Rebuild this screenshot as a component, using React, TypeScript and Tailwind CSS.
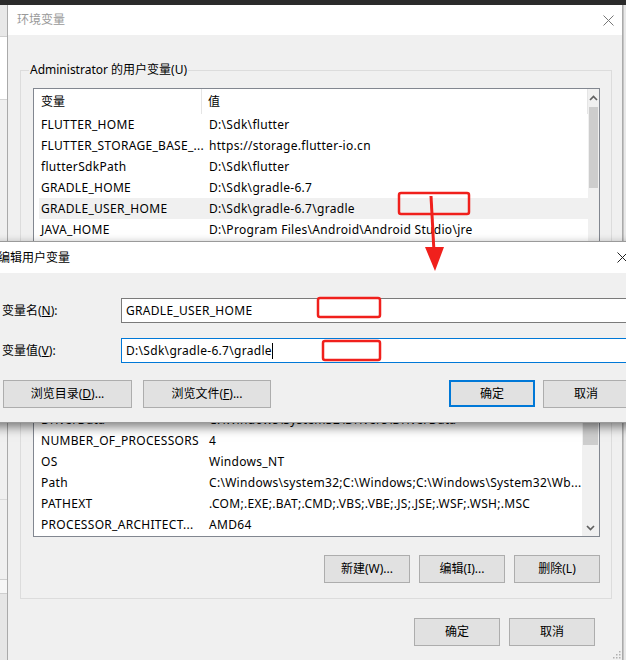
import type { ReactNode } from 'react';

type EnvVar = { name: string; value: string; selected?: boolean };

const userVars: EnvVar[] = [
  { name: 'FLUTTER_HOME', value: 'D:\\Sdk\\flutter' },
  { name: 'FLUTTER_STORAGE_BASE_...', value: 'https://storage.flutter-io.cn' },
  { name: 'flutterSdkPath', value: 'D:\\Sdk\\flutter' },
  { name: 'GRADLE_HOME', value: 'D:\\Sdk\\gradle-6.7' },
  { name: 'GRADLE_USER_HOME', value: 'D:\\Sdk\\gradle-6.7\\gradle', selected: true },
  { name: 'JAVA_HOME', value: 'D:\\Program Files\\Android\\Android Studio\\jre' },
  { name: 'OneDrive', value: 'C:\\Users\\Administrator\\OneDrive' },
  { name: 'Path', value: 'C:\\Users\\Administrator\\AppData\\Local\\Microsoft\\WindowsApps;' },
];

const systemVars: EnvVar[] = [
  { name: 'ComSpec', value: 'C:\\Windows\\system32\\cmd.exe' },
  { name: 'DriverData', value: 'C:\\Windows\\System32\\Drivers\\DriverData' },
  { name: 'NUMBER_OF_PROCESSORS', value: '4' },
  { name: 'OS', value: 'Windows_NT' },
  { name: 'Path', value: 'C:\\Windows\\system32;C:\\Windows;C:\\Windows\\System32\\Wb...' },
  { name: 'PATHEXT', value: '.COM;.EXE;.BAT;.CMD;.VBS;.VBE;.JS;.JSE;.WSF;.WSH;.MSC' },
  { name: 'PROCESSOR_ARCHITECT...', value: 'AMD64' },
];

function WinButton({ children, className = '' }: { children: ReactNode; className?: string }) {
  return (
    <div className={`h-[28px] flex items-center justify-center bg-[#e1e1e1] border border-[#adadad] text-black ${className}`}>
      {children}
    </div>
  );
}

function Chevron({ down = false }: { down?: boolean }) {
  return (
    <svg width="9" height="6" viewBox="0 0 9 6" className={down ? 'rotate-180' : ''}>
      <path d="M1 5L4.5 1.5L8 5" fill="none" stroke="#606060" strokeWidth="1.7" />
    </svg>
  );
}

function CloseGlyph({ color }: { color: string }) {
  return (
    <svg width="11" height="11" viewBox="0 0 11 11">
      <path d="M0.5 0.5L10.5 10.5M10.5 0.5L0.5 10.5" stroke={color} strokeWidth="1" />
    </svg>
  );
}

function Row({ item }: { item: EnvVar }) {
  return (
    <div className={`h-[21px] ml-[5px] flex items-center shrink-0 tracking-[0.3px] ${item.selected ? 'bg-[#f0f0f0]' : ''}`}>
      <div className="w-[163px] shrink-0 pl-[2px] whitespace-nowrap">{item.name}</div>
      <div className="pl-[7px] whitespace-nowrap">{item.value}</div>
    </div>
  );
}

function Group({ label, children }: { label: string; children: ReactNode }) {
  return (
    <div className="relative ml-[12px] mr-[10px] border border-[#dcdcdc] pt-[17px] pl-[12px] pr-[11px] pb-[15px]">
      <span className="absolute left-[8px] top-[-10px] px-[1px] bg-[#f0f0f0] leading-[18px]">{label}</span>
      {children}
    </div>
  );
}

function GroupButtons() {
  return (
    <div className="mt-[18px] flex justify-end gap-[9px]">
      <WinButton className="w-[86px]">新建(W)...</WinButton>
      <WinButton className="w-[86px]">编辑(I)...</WinButton>
      <WinButton className="w-[86px]">删除(L)</WinButton>
    </div>
  );
}

function UserList() {
  return (
    <div className="h-[160px] border border-[#828790] bg-white flex overflow-hidden">
      <div className="flex-1 flex flex-col">
        <div className="h-[25px] flex items-center shrink-0">
          <div className="w-[168px] pl-[7px] h-full flex items-center border-r border-[#e5e5e5]">变量</div>
          <div className="flex-1 pl-[6px] h-full flex items-center border-r border-[#e5e5e5]">值</div>
        </div>
        {userVars.map((v) => (
          <Row key={v.name} item={v} />
        ))}
      </div>
      <div className="w-[17px] bg-[#f0f0f0] flex flex-col">
        <div className="h-[18px] flex items-center justify-center">
          <Chevron />
        </div>
        <div className="mx-[1px] h-[81px] bg-[#cdcdcd]" />
      </div>
    </div>
  );
}

function SystemList() {
  return (
    <div className="h-[195px] border border-[#828790] bg-white flex overflow-hidden">
      <div className="flex-1 flex flex-col justify-end pb-[1px]">
        {systemVars.map((v) => (
          <Row key={v.name} item={v} />
        ))}
      </div>
      <div className="w-[17px] bg-[#f0f0f0] flex flex-col">
        <div className="h-[17px] flex items-center justify-center">
          <Chevron />
        </div>
        <div className="mt-[50px] mx-[1px] h-[35px] bg-[#cdcdcd]" />
        <div className="flex-1" />
        <div className="h-[17px] flex items-center justify-center">
          <Chevron down />
        </div>
      </div>
    </div>
  );
}

function MainDialog() {
  return (
    <div className="w-[616px] flex flex-col border-x border-[#aaaaaa] bg-[#f0f0f0]">
      {/* title bar (inactive) */}
      <div className="h-[30px] bg-white flex items-center justify-between pl-[9px] pr-[8px] shrink-0">
        <span className="text-[#999999]">环境变量</span>
        <CloseGlyph color="#777777" />
      </div>

      <div className="mt-[35px]">
        <Group label="Administrator 的用户变量(U)">
          <UserList />
          <GroupButtons />
        </Group>
      </div>

      <div className="mt-[14px]">
        <Group label="系统变量(S)">
          <SystemList />
          <GroupButtons />
        </Group>
      </div>

      <div className="mt-[19px] mr-[27px] flex justify-end gap-[9px]">
        <WinButton className="w-[86px]">确定</WinButton>
        <WinButton className="w-[86px]">取消</WinButton>
      </div>

      {/* size grip */}
      <div className="flex-1 flex items-end justify-end pr-[1px] pb-[1px]">
        <svg width="9" height="9" viewBox="0 0 9 9">
          {[
            [7, 1], [7, 4], [4, 4], [7, 7], [4, 7], [1, 7],
          ].map(([x, y]) => (
            <rect key={`${x}-${y}`} x={x} y={y} width="1.5" height="1.5" fill="#b0b0b0" />
          ))}
        </svg>
      </div>
    </div>
  );
}

function BackWindow() {
  // strip of another window peeking out on the left
  return (
    <div className="w-[7px] flex flex-col bg-[#f0f0f0] overflow-hidden">
      <div className="h-[32px] bg-[#e8e8e8] border-b border-[#cfcfcf]" />
      <div className="h-[63px] bg-white border-b border-[#d5d5d5]" />
      <div className="h-[400px] bg-[#f0f0f0] border-b border-[#dadada]" />
      <div className="h-[80px] bg-[#f0f0f0] border-b border-[#cfcfcf]" />
      <div className="h-[14px] bg-[#f7f7f7] border-b border-[#cfcfcf]" />
      <div className="flex-1 bg-[#e6e6e6]" />
    </div>
  );
}

function EditDialog() {
  return (
    <div className="absolute left-[-12px] top-[241px] w-[660px] h-[182px] flex flex-col bg-[#f0f0f0] border border-[#9a9a9a] shadow-[0_4px_10px_rgba(0,0,0,0.5)]">
      <div className="h-[31px] bg-white flex items-center justify-between pl-[9px] pr-[19px] shrink-0">
        <span>编辑用户变量</span>
        <CloseGlyph color="#222222" />
      </div>

      <div className="pl-[13px] pr-[18px] pt-[25px]">
        <div className="flex items-center h-[25px]">
          <span className="w-[119px]">
            变量名(<span className="underline">N</span>):
          </span>
          <div className="flex-1 h-full bg-white border border-[#7a7a7a] flex items-center pl-[4px] tracking-[0.3px]">GRADLE_USER_HOME</div>
        </div>
        <div className="flex items-center h-[25px] mt-[15px]">
          <span className="w-[119px]">
            变量值(<span className="underline">V</span>):
          </span>
          <div className="flex-1 h-full bg-white border border-[#0078d7] flex items-center pl-[4px] tracking-[0.3px]">
            D:\Sdk\gradle-6.7\gradle
            <span className="inline-block w-[1px] h-[16px] bg-black" />
          </div>
        </div>

        <div className="mt-[17px] flex items-center pl-[1px] gap-[11px]">
          <WinButton className="w-[129px] h-[27px]">
            浏览目录(<span className="underline">D</span>)...
          </WinButton>
          <WinButton className="w-[128px] h-[27px]">
            浏览文件(<span className="underline">F</span>)...
          </WinButton>
          <div className="flex-1" />
          <div className="flex gap-[8px]">
            <div className="w-[86px] h-[27px] flex items-center justify-center bg-[#e1e1e1] border-2 border-[#0078d7]">确定</div>
            <WinButton className="w-[86px] h-[27px]">取消</WinButton>
          </div>
        </div>
      </div>
    </div>
  );
}

function Annotations() {
  const red = '#f0201c';
  return (
    <svg className="absolute inset-0 pointer-events-none" width="626" height="660" viewBox="0 0 626 660">
      <rect x="399" y="193" width="70" height="21" rx="2" fill="none" stroke={red} strokeWidth="2.5" />
      <line x1="431" y1="196" x2="434" y2="252" stroke={red} strokeWidth="3" />
      <polygon points="425,247 444,247 435,271" fill={red} />
      <rect x="318" y="298" width="62" height="19" rx="2" fill="none" stroke={red} strokeWidth="2.5" />
      <rect x="323" y="341" width="57" height="19" rx="2" fill="none" stroke={red} strokeWidth="2.5" />
    </svg>
  );
}

export default function App() {
  return (
    <div className="relative w-[626px] h-[660px] overflow-hidden flex flex-col bg-[#e6e6e6] text-[12px] leading-[16px] text-black font-['Noto_Sans','Noto_Sans_CJK_SC',sans-serif]">
      <div className="h-[5px] bg-[#2b2b2b] shrink-0" />
      <div className="flex-1 flex min-h-0">
        <BackWindow />
        <MainDialog />
        <div className="w-[3px] bg-[#e9e9e9] border-l border-[#c4c4c4]" />
      </div>
      <EditDialog />
      <Annotations />
    </div>
  );
}
